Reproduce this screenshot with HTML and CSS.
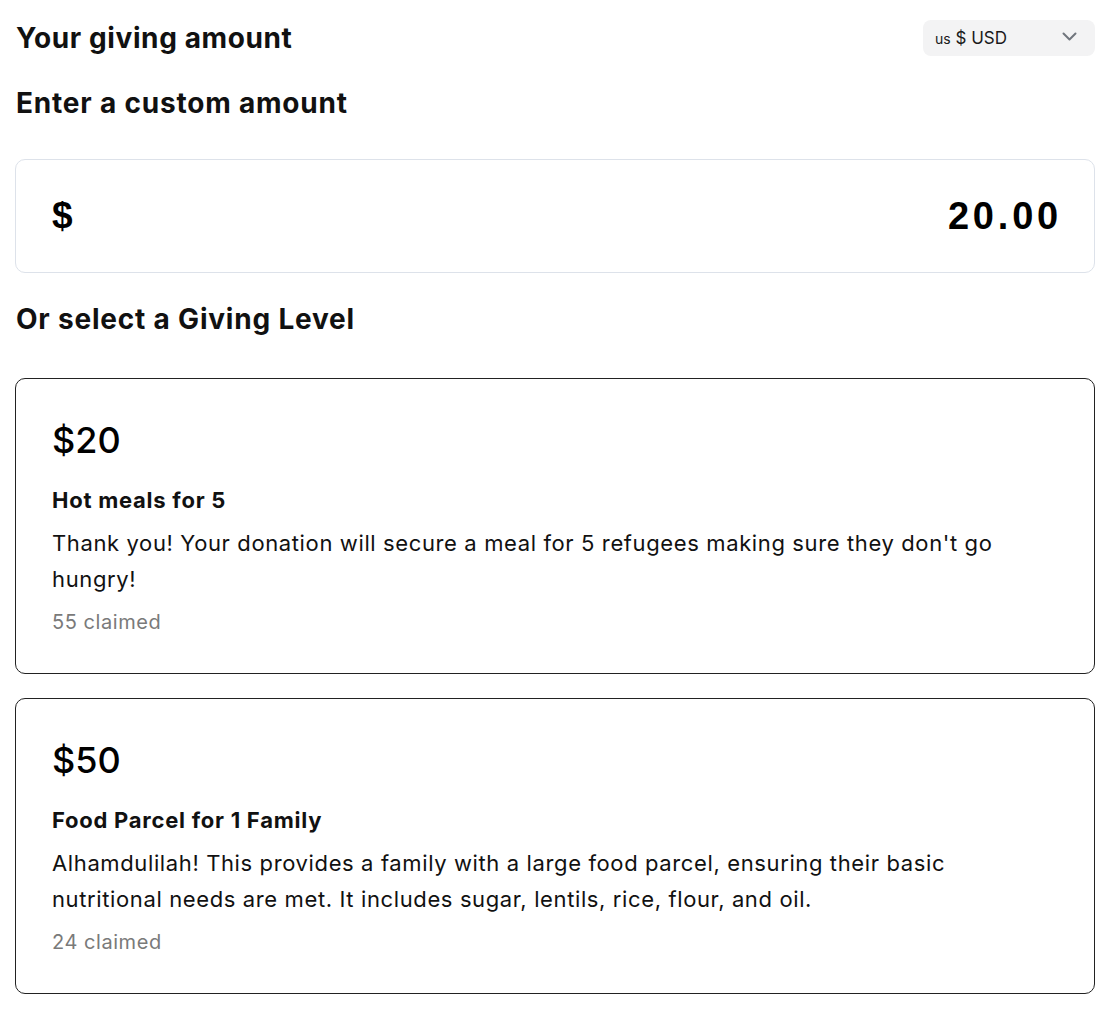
FILE: index.html
```html
<!DOCTYPE html>
<html>
<head>
<meta charset="utf-8">
<link rel="stylesheet" href="styles.css">
</head>
<body>
<main class="page">
  <div class="header-row">
    <h1 class="title">Your giving amount</h1>
    <div class="currency">
      <span class="cur-label"><span class="cur-code">us</span> $ USD</span>
      <svg class="chev" width="15" height="10" viewBox="0 0 15 10"><path d="M1.5 1.5 L7.5 7.5 L13.5 1.5" fill="none" stroke="#70757d" stroke-width="2" stroke-linecap="round" stroke-linejoin="round"/></svg>
    </div>
  </div>
  <h2 class="subtitle">Enter a custom amount</h2>
  <div class="amount-box">
    <span class="amt-sym">$</span>
    <span class="amt-val">20.00</span>
  </div>
  <h2 class="subtitle level-title">Or select a Giving Level</h2>
  <div class="levels">
    <div class="level">
      <div class="level-price">$20</div>
      <div class="level-name">Hot meals for 5</div>
      <p class="level-desc">Thank you! Your donation will secure a meal for 5 refugees making sure they don't go hungry!</p>
      <div class="level-claimed">55 claimed</div>
    </div>
    <div class="level">
      <div class="level-price">$50</div>
      <div class="level-name">Food Parcel for 1 Family</div>
      <p class="level-desc">Alhamdulilah! This provides a family with a large food parcel, ensuring their basic nutritional needs are met. It includes sugar, lentils, rice, flour, and oil.</p>
      <div class="level-claimed">24 claimed</div>
    </div>
  </div>
</main>
</body>
</html>
```
FILE: styles.css
```css
* { box-sizing: border-box; }
html, body { margin: 0; padding: 0; background: #fff; }
body {
  font-family: "Inter", "Noto Sans", sans-serif;
  color: #111;
}
.page {
  padding: 18px 12px 0 15px;
}
.header-row {
  display: flex;
  justify-content: space-between;
  align-items: flex-start;
}
.title {
  margin: 2px 0 0 1px;
  font-size: 28px;
  font-weight: 700;
  letter-spacing: 0.6px;
  line-height: 36px;
}
.currency {
  margin-top: 2px;
  width: 172px;
  height: 36px;
  background: #f3f3f4;
  border-radius: 8px;
  display: flex;
  align-items: center;
  justify-content: space-between;
  padding: 0 18px 0 12px;
}
.cur-label {
  font-size: 17px;
  color: #1a1a1a;
}
.cur-code { font-size: 14px; }
.chev { display: block; margin-top: -2px; }
.subtitle {
  margin: 29px 0 0 1px;
  font-size: 28px;
  font-weight: 700;
  letter-spacing: 0.8px;
  line-height: 36px;
}
.amount-box {
  margin-top: 38px;
  height: 114px;
  border: 1px solid #dde2ea;
  border-radius: 10px;
  display: flex;
  align-items: center;
  justify-content: space-between;
  padding: 0 32px 0 36px;
  font-family: "Liberation Sans", Arial, sans-serif;
  font-weight: 700;
  color: #000;
}
.amt-sym { font-size: 37px; }
.amt-val { font-size: 38px; letter-spacing: 3.8px; }
.level-title { margin-top: 28px; }
.levels {
  margin-top: 41px;
  display: flex;
  flex-direction: column;
  gap: 24px;
}
.level {
  border: 1px solid #222;
  border-radius: 10px;
  height: 296px;
  padding: 39px 36px 0 36px;
}
.level-price {
  font-size: 36px;
  font-weight: 500;
  line-height: 44px;
  color: #000;
}
.level-name {
  margin-top: 23px;
  font-size: 22px;
  font-weight: 700;
  line-height: 30px;
  letter-spacing: 0.75px;
}
.level-desc {
  margin: 10px 0 0 0;
  font-size: 22px;
  line-height: 36px;
  font-weight: 400;
  letter-spacing: 0.62px;
}
.level-claimed {
  margin-top: 11px;
  font-size: 20px;
  line-height: 28px;
  color: #7a7a7a;
  letter-spacing: 0.55px;
}
```
